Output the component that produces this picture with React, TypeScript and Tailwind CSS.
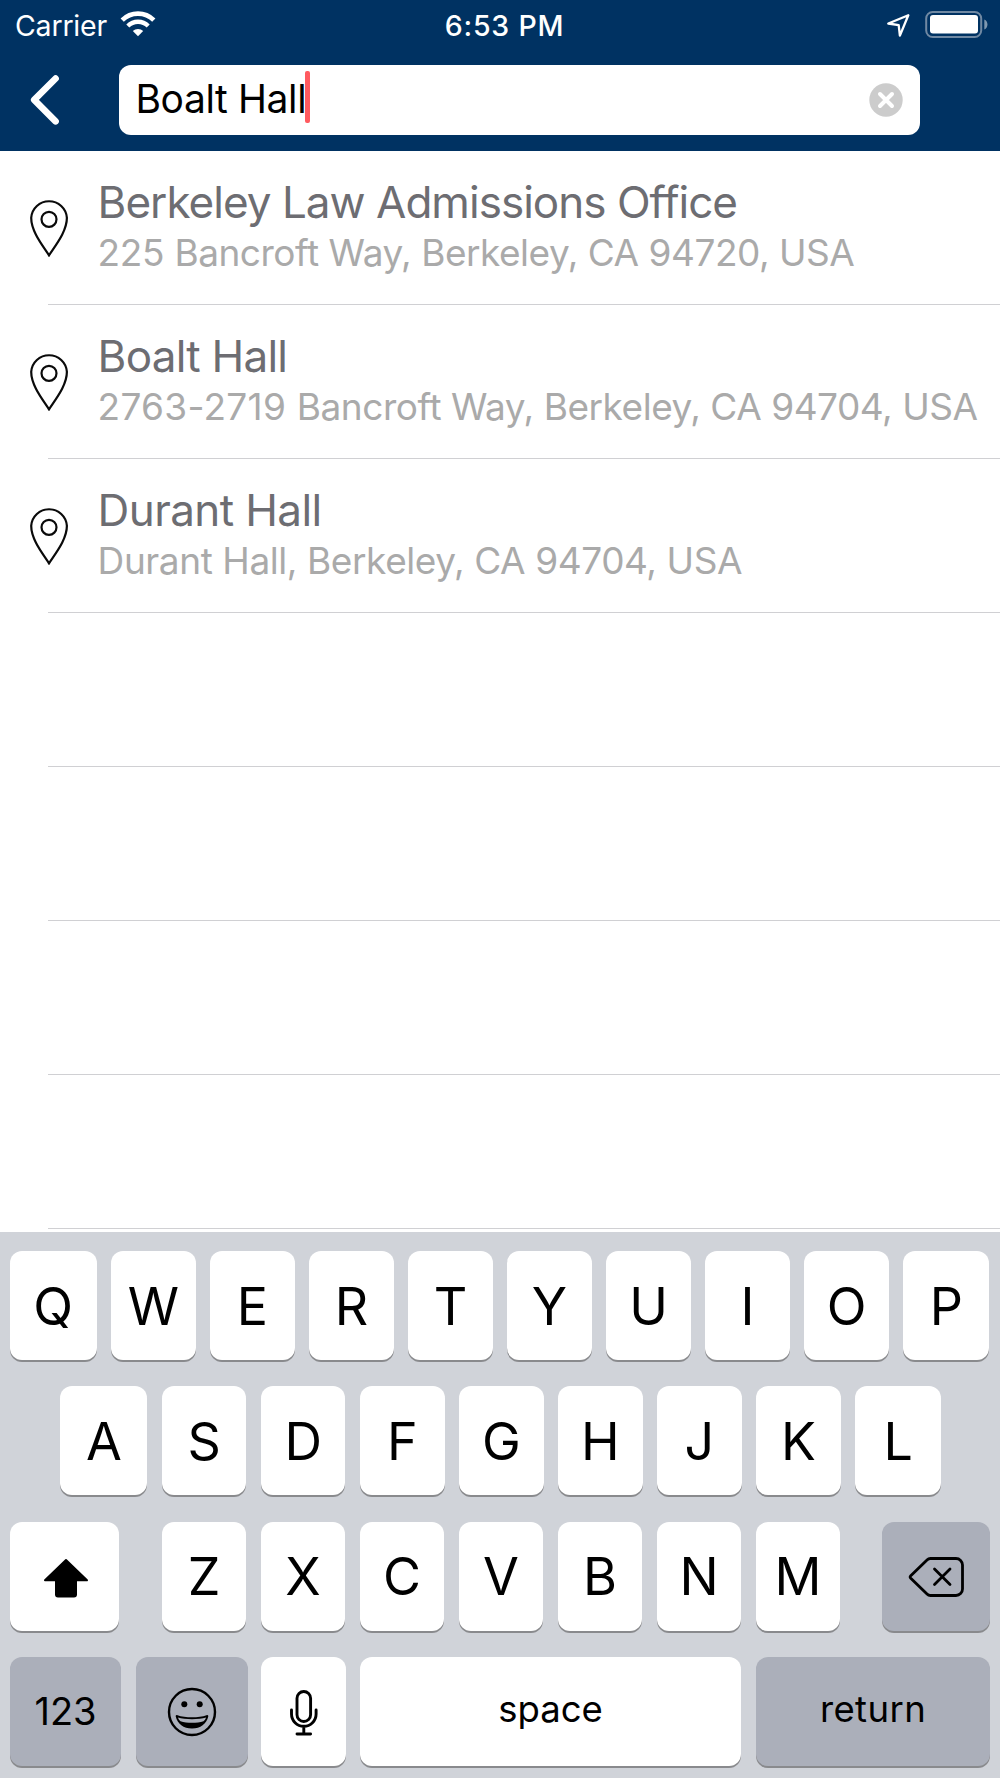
import type { ReactNode } from 'react';

const places = [
  {
    name: 'Berkeley Law Admissions Office',
    number: '225 ',
    address: 'Bancroft Way, Berkeley, CA 94720, USA',
    nameSpacing: 'tracking-[-0.97px]',
    numberSpacing: 'tracking-[-0.3px]',
    addressSpacing: 'tracking-[-0.48px]',
  },
  {
    name: 'Boalt Hall',
    number: '2763-2719 ',
    address: 'Bancroft Way, Berkeley, CA 94704, USA',
    nameSpacing: 'tracking-[-0.75px]',
    numberSpacing: 'tracking-[0.28px]',
    addressSpacing: 'tracking-[-0.47px]',
  },
  {
    name: 'Durant Hall',
    number: '',
    address: 'Durant Hall, Berkeley, CA 94704, USA',
    nameSpacing: 'tracking-[-0.6px]',
    numberSpacing: 'tracking-[0px]',
    addressSpacing: 'tracking-[-0.42px]',
  },
];

function StatusBar() {
  return (
    <div className="grid h-[50px] grid-cols-3 pt-[11px] text-white">
      <div className="flex pl-[15px]">
        <span className="text-[28.5px] leading-[29px] tracking-[-0.2px]">Carrier</span>
        <svg className="ml-[13px] h-[26px] w-[36px]" viewBox="0 0 36 26" fill="none">
          <path d="M2.2 9.2a22.3 22.3 0 0 1 31.6 0" stroke="white" strokeWidth="4.6" />
          <path d="M7.8 15a14.4 14.4 0 0 1 20.4 0" stroke="white" strokeWidth="4.3" />
          <path d="M18 25.3l-5.2-5.2a7.4 7.4 0 0 1 10.4 0z" fill="white" />
        </svg>
      </div>
      <div className="flex justify-center pl-[9px]">
        <span className="text-[28.5px] font-medium leading-[29px] tracking-[0.8px]">6:53 PM</span>
      </div>
      <div className="flex justify-end pr-[12px]">
        <svg className="mr-[14px] mt-[2px] h-[24px] w-[24px]" viewBox="0 0 24 24" fill="none">
          <path
            d="M21.3 2.2L1.3 10.5l10.4 1.7 1.2 10.4z"
            stroke="white"
            strokeWidth="2.3"
            strokeLinejoin="round"
          />
        </svg>
        <svg className="h-[27px] w-[63px]" viewBox="0 0 63 27" fill="none">
          <rect x="1.2" y="1" width="55" height="25" rx="6.5" stroke="#7089a3" strokeWidth="2" />
          <rect x="5" y="4" width="48" height="18.5" rx="3" fill="white" />
          <path d="M59.3 8.5c4.2 1.6 4.2 8.4 0 10z" fill="#7f98b0" />
        </svg>
      </div>
    </div>
  );
}

function SearchBar() {
  return (
    <div className="flex h-[101px] items-start pl-[28px] pt-[14.5px]">
      <svg className="mt-[8.5px] h-[54px] w-[34px] shrink-0" viewBox="0 0 34 54" fill="none">
        <path
          d="M27.6 5.5L6.2 26.9L27.6 48.3"
          stroke="white"
          strokeWidth="6.6"
          strokeLinecap="round"
          strokeLinejoin="round"
        />
      </svg>
      <div className="ml-[57px] flex h-[70px] w-[801px] items-center rounded-[12px] bg-white pl-[16.5px] pr-[17px]">
        <span className="-mt-[2px] whitespace-nowrap text-[39px] leading-[40px] tracking-[-0.4px] text-black">
          Boalt Hall
        </span>
        <span className="-ml-[1.5px] -mt-[5px] h-[52px] w-[5px] rounded-[2px] bg-[#ff5a5f]" />
        <svg className="ml-auto h-[34px] w-[34px]" viewBox="0 0 34 34">
          <circle cx="17" cy="17" r="16.7" fill="#cccccc" />
          <path d="M11 11l12 12M23 11L11 23" stroke="white" strokeWidth="4" strokeLinecap="round" />
        </svg>
      </div>
    </div>
  );
}

function PinIcon() {
  return (
    <svg className="mt-[46px] h-[60px] w-[40px] shrink-0" viewBox="0 0 40 60" fill="none" stroke="#0a0a0a" strokeWidth="2.2">
      <path d="M20 58.3C14.5 49.5 2.2 35 2.2 20.8A17.9 17.9 0 0 1 37.9 20.8C37.9 35 25.5 49.5 20 58.3z" />
      <circle cx="20" cy="22.3" r="7.5" />
    </svg>
  );
}

function Results() {
  return (
    <div className="h-[1081px] overflow-hidden bg-white">
      {places.map((p) => (
        <div key={p.name} className="relative flex h-[154px] pl-[28.6px]">
          <PinIcon />
          <div className="ml-[29px] flex flex-col whitespace-nowrap pt-[29px]">
            <span className={`text-[44px] leading-[44px] text-[#6d6d72] ${p.nameSpacing}`}>{p.name}</span>
            <span className={`mt-[10px] text-[37px] leading-[37px] text-[#aaaaaa] ${p.addressSpacing}`}>
              <span className={p.numberSpacing}>{p.number}</span>
              {p.address}
            </span>
          </div>
          <div className="absolute bottom-0 left-[48px] right-0 h-px bg-[#d0d0d3]" />
        </div>
      ))}
      {[0, 1, 2, 3].map((i) => (
        <div key={i} className="ml-[48px] h-[154px] border-b border-[#d0d0d3]" />
      ))}
    </div>
  );
}

function Key({ width, dark, children }: { width: string; dark?: boolean; children: ReactNode }) {
  return (
    <div
      className={`flex h-[109px] shrink-0 items-center justify-center rounded-[12px] text-black shadow-[0_2px_0_#898a8d] ${width} ${
        dark ? 'bg-[#abafba]' : 'bg-white'
      }`}
    >
      {children}
    </div>
  );
}

function Letters({ row, first, last }: { row: string; first: string; last: string }) {
  return (
    <>
      {row.split('').map((c, i) => (
        <Key key={c} width={i === 0 ? first : i === row.length - 1 ? last : 'w-[84.5px]'}>
          <span className="mt-[2px] text-[52px] leading-[52px]">{c}</span>
        </Key>
      ))}
    </>
  );
}

function Keyboard() {
  return (
    <div className="flex h-[546px] flex-col gap-[26.4px] bg-[#d0d3d9] pt-[19px]">
      <div className="flex gap-[14.55px] pl-[10px]">
        <Letters row="QWERTYUIOP" first="w-[86.5px]" last="w-[86px]" />
      </div>
      <div className="flex gap-[14.55px] pl-[60.4px]">
        <Letters row="ASDFGHJKL" first="w-[87px]" last="w-[86px]" />
      </div>
      <div className="flex justify-between pl-[10px] pr-[10px]">
        <Key width="w-[108.5px]">
          <svg className="ml-[3px] mt-[3px] h-[42px] w-[48px]" viewBox="0 0 48 42">
            <path
              d="M24 3L45 23.2H34V37.5a2 2 0 0 1-2 2H16a2 2 0 0 1-2-2V23.2H3z"
              fill="black"
              stroke="black"
              strokeWidth="2"
              strokeLinejoin="round"
            />
          </svg>
        </Key>
        <div className="flex gap-[14.5px] pl-[2px]">
          <Letters row="ZXCVBNM" first="w-[84.5px]" last="w-[84.5px]" />
        </div>
        <Key width="w-[108.5px]" dark>
          <svg className="mt-[2px] h-[42px] w-[58px]" viewBox="0 0 58 42" fill="none" stroke="black" strokeLinecap="round" strokeLinejoin="round">
            <path d="M23.5 2.5H49a6.5 6.5 0 0 1 6.5 6.5v24a6.5 6.5 0 0 1-6.5 6.5H23.5a5 5 0 0 1-3.5-1.5L3.5 22a1.5 1.5 0 0 1 0-2L20 4a5 5 0 0 1 3.5-1.5z" strokeWidth="2.8" />
            <path d="M27.5 13L43 28.5M43 13L27.5 28.5" strokeWidth="2.8" />
          </svg>
        </Key>
      </div>
      <div className="flex pl-[10px]">
        <Key width="w-[111px]" dark>
          <span className="-mt-[1px] text-[38px] leading-[38px]">123</span>
        </Key>
        <div className="w-[15px]" />
        <Key width="w-[111.5px]" dark>
          <svg className="h-[50px] w-[50px]" viewBox="0 0 50 50">
            <circle cx="25" cy="25" r="23" fill="none" stroke="black" strokeWidth="2.4" />
            <circle cx="17.3" cy="17.3" r="3" />
            <circle cx="32.7" cy="17.3" r="3" />
            <path d="M10.5 28.2C18 31 32 31 39.5 28.2C41 27.7 41.5 28.5 41.2 29.8C39.5 37 33.5 41.5 25 41.5S10.5 37 8.8 29.8C8.5 28.5 9 27.7 10.5 28.2z" />
            <path d="M11 30.6C18 32.9 32 32.9 39 30.6C38.5 32.5 37.6 33.5 36.5 34.2C30 36.3 20 36.3 13.5 34.2C12.4 33.5 11.5 32.5 11 30.6z" fill="#abafba" />
          </svg>
        </Key>
        <div className="w-[13.5px]" />
        <Key width="w-[84.5px]">
          <svg className="ml-[1px] h-[48px] w-[30px]" viewBox="0 0 30 48" fill="none" stroke="black" strokeWidth="2.9" strokeLinecap="round">
            <rect x="8" y="3.5" width="13.6" height="30" rx="6.8" />
            <path d="M2.5 22v4a12.3 12.3 0 0 0 24.6 0V22M14.8 38.5v7M8 46h13.6" />
          </svg>
        </Key>
        <div className="w-[14.5px]" />
        <Key width="w-[381px]">
          <span className="-mt-[5px] text-[36.5px] leading-[38px]">space</span>
        </Key>
        <div className="w-[15px]" />
        <Key width="w-[234px]" dark>
          <span className="-mt-[5px] text-[36.5px] leading-[38px] tracking-[0.4px]">return</span>
        </Key>
      </div>
    </div>
  );
}

export default function App() {
  return (
    <div className="flex h-[1778px] w-[1000px] flex-col overflow-hidden bg-white font-['Inter',sans-serif]">
      <header className="h-[151px] shrink-0 bg-[#003262]">
        <StatusBar />
        <SearchBar />
      </header>
      <Results />
      <Keyboard />
    </div>
  );
}
